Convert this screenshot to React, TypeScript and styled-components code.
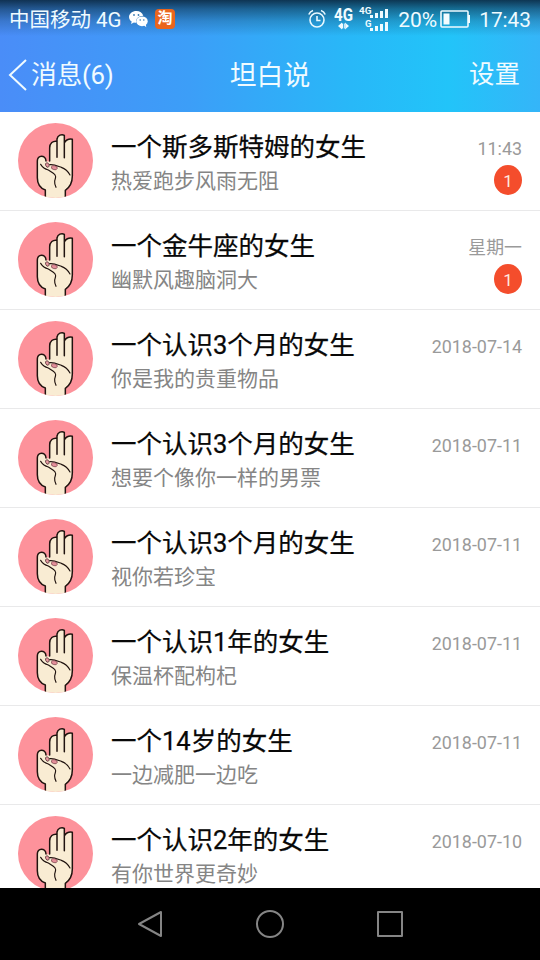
import React from 'react';
import styled, { createGlobalStyle } from 'styled-components';

const Global = createGlobalStyle`
  * { box-sizing: border-box; }
  body {
    margin: 0;
    background: #000;
    font-family: Roboto, "Noto Sans CJK SC", sans-serif;
  }
`;

const Screen = styled.div`
  width: 540px;
  height: 960px;
  display: flex;
  flex-direction: column;
  overflow: hidden;
  background: #fff;
`;

const Header = styled.header`
  height: 112px;
  flex: none;
  color: #f0fbff;
  background:
    linear-gradient(180deg, rgba(10, 40, 65, 0.9) 0, rgba(12, 52, 80, 0.6) 9px, rgba(15, 60, 90, 0.27) 21px, rgba(20, 70, 100, 0) 36px),
    linear-gradient(90deg, #4a8df8 0%, #3c9ef8 35%, #28b8f8 65%, #22c4f9 83%, #35b5f8 100%);
`;

const StatusBar = styled.div`
  height: 38px;
  display: flex;
  justify-content: space-between;
  padding: 1px 9px 0 9px;
`;

const StatusGroup = styled.div`
  display: flex;
  align-items: center;
  height: 36px;
`;

const StatusText = styled.span<{ $size: number }>`
  font-size: ${(p) => p.$size}px;
  line-height: 38px;
  white-space: pre;
  padding-top: 2px;
`;

const Carrier = styled(StatusText)`
  width: 120px;
`;

const Glyph = styled.svg<{ $left?: number }>`
  display: block;
  flex: none;
  margin-left: ${(p) => p.$left ?? 0}px;
`;

const ShopBadge = styled.span`
  width: 20px;
  height: 20px;
  margin: -1px 0 0 7px;
  border-radius: 4px;
  background: #ea651d;
  color: #fff;
  font-size: 15px;
  font-weight: 700;
  line-height: 19px;
  text-align: center;
`;

const Percent = styled(StatusText)`
  margin-left: 8px;
`;

const Clock = styled(StatusText)`
  margin-left: 8px;
`;

const NavBar = styled.nav`
  height: 74px;
  display: grid;
  grid-template-columns: 1fr auto 1fr;
  align-items: center;
  padding: 0 20px 0 8px;
  line-height: 74px;
`;

const Back = styled.div`
  display: flex;
  align-items: center;
  gap: 4px;
  margin-top: -2px;
  font-size: 25.8px;
  letter-spacing: -0.3px;
`;

const NavTitle = styled.h1`
  margin: 1px 0 0;
  padding-left: 12px;
  font-size: 26.8px;
  font-weight: 400;
`;

const Settings = styled.div`
  margin-top: -3px;
  text-align: right;
  font-size: 25.5px;
`;

const List = styled.main`
  height: 776px;
  flex: none;
  overflow: hidden;
`;

const Row = styled.article`
  height: 99px;
  display: flex;
  padding: 11px 18px 0;
  border-bottom: 1px solid #e9e9ea;
`;

const Texts = styled.div`
  flex: 1;
  margin-left: 18px;
  white-space: nowrap;
`;

const Name = styled.h2`
  margin: 5px 0 0;
  color: #080808;
  font-size: 25.5px;
  font-weight: 400;
  line-height: 38px;
  -webkit-text-stroke: 0.25px #080808;
`;

const Message = styled.p`
  margin: -1px 0 0;
  color: #858585;
  font-size: 21px;
  line-height: 32px;
`;

const Side = styled.div`
  display: flex;
  flex-direction: column;
  align-items: flex-end;
`;

const Time = styled.time`
  margin-top: 13px;
  height: 26px;
  color: #9a9a9a;
  font-size: 17.9px;
  line-height: 26px;
  white-space: nowrap;
`;

const Unread = styled.span`
  width: 28px;
  height: 30px;
  margin-top: 3px;
  border-radius: 50%;
  background: #f44d2c;
  color: #ffeadf;
  font-size: 17px;
  line-height: 33px;
  text-align: center;
`;

const SystemBar = styled.footer`
  height: 72px;
  flex: none;
  display: flex;
  align-items: center;
  justify-content: center;
  gap: 90px;
  background: #000;
`;

const Avatar = ({ id }: { id: string }) => (
  <Glyph width="75" height="75" viewBox="24 23 225 225">
    <clipPath id={id}>
      <circle cx="136.500" cy="135.500" r="112.500" />
    </clipPath>
    <g clipPath={`url(#${id})`}>
      <rect x="24" y="23" width="225" height="225" fill="#fd929b" />
      <path
        d="M106 254V224C88 217 82 204 82 187V138C81 117 107 118 108 137L119 139V98C119 83 129 76 141 78V71C143 60 155 55 163 60V83C166 75 176 69 187 72V182C187 202 179 216 166 225V254Z"
        fill="#f9ecd3"
      />
      <g fill="none" stroke="#20130f" strokeWidth="4.500" strokeLinecap="round" strokeLinejoin="round">
        <path d="M106 254V224C88 217 82 204 82 187V138C81 117 107 118 108 137" />
        <path d="M119 137V98C119 83 129 76 141 78V126M141 78V71C143 60 155 55 163 60V127M163 83C166 75 176 69 187 72V182C187 202 179 216 166 225V254" />
        <path d="M92 147C97 155 104 161 115 164L130 174C140 181 137 187 134 197Q133 205 138 216" strokeWidth="3.500" />
        <path d="M119 148C130 146 143 152 154 156Q171 162 180 179" strokeWidth="3.500" />
      </g>
      <ellipse cx="112" cy="149" rx="5" ry="7" fill="#e99ba3" stroke="#44252a" strokeWidth="2" transform="rotate(-25 112 149)" />
      <ellipse cx="133" cy="157" rx="9" ry="6" fill="#e48f99" stroke="#75434a" strokeWidth="2" transform="rotate(15 133 157)" />
    </g>
  </Glyph>
);

const WeChat = () => (
  <Glyph width="19" height="17" viewBox="0 0 19 17">
    <path d="M7.500 0C3.300 0 0 2.700 0 6c0 1.900 1 3.500 2.700 4.600L2 13l2.900-1.500c.8.200 1.500.3 2.300.3C6.500 7.500 9.500 5 14.300 4.800 13.400 2 10.700 0 7.500 0Z" fill="#fff" />
    <ellipse cx="13" cy="10.300" rx="5.700" ry="4.900" fill="#fff" />
    <path d="m14.500 14 2.800 2.200-.5-3Z" fill="#fff" />
    <g fill="#397bb3">
      <circle cx="5" cy="4" r=".9" />
      <circle cx="9.500" cy="4" r=".9" />
      <circle cx="11.200" cy="9" r=".8" />
      <circle cx="14.800" cy="9" r=".8" />
    </g>
  </Glyph>
);

const Alarm = () => (
  <Glyph width="18" height="20" viewBox="0 0 18 20" fill="none" stroke="#e8f8ff" strokeWidth="1.600">
    <circle cx="9" cy="11" r="7" />
    <path d="M9 7v4.500h3.500M.8 5.500Q2 2.500 5 1.500M17.200 5.500Q16 2.500 13 1.500" />
  </Glyph>
);

const Network = () => (
  <Glyph $left={8} width="56" height="30" viewBox="0 0 56 30" fill="#f0fbff">
    <text x="0" y="17" fontSize="18" fontWeight="700" textLength="19" lengthAdjust="spacingAndGlyphs">4G</text>
    <path d="m4 22 4-3.500v7Zm11 0-4-3.500v7ZM8 19.500h1.200v5H8Zm2.200 0h1v5h-1Z" />
    <text x="25" y="10" fontSize="9.500" fontWeight="700" textLength="12.500" lengthAdjust="spacingAndGlyphs">4G</text>
    <text x="31" y="23" fontSize="9.500" fontWeight="700">G</text>
    <path d="M36 11h3v3h-3Zm5-2h3v5h-3Zm5-2h3v7h-3Zm5-2h3v9h-3ZM36 24h3v3h-3Zm5-2h3v5h-3Zm5-2h3v7h-3Zm5-2h3v9h-3Z" />
  </Glyph>
);

const Battery = () => (
  <Glyph $left={3} width="31" height="18" viewBox="0 0 31 18">
    <rect x="1" y="1" width="27" height="16" rx="1" fill="none" stroke="#eefaff" strokeWidth="1.600" />
    <path d="M3.500 3.500h6v11h-6ZM28 5h2v8h-2Z" fill="#f3fcff" />
  </Glyph>
);

interface Conversation {
  name: string;
  message: string;
  time: string;
  unread?: number;
}

const conversations: Conversation[] = [
  { name: '一个斯多斯特姆的女生', message: '热爱跑步风雨无阻', time: '11:43', unread: 1 },
  { name: '一个金牛座的女生', message: '幽默风趣脑洞大', time: '星期一', unread: 1 },
  { name: '一个认识3个月的女生', message: '你是我的贵重物品', time: '2018-07-14' },
  { name: '一个认识3个月的女生', message: '想要个像你一样的男票', time: '2018-07-11' },
  { name: '一个认识3个月的女生', message: '视你若珍宝', time: '2018-07-11' },
  { name: '一个认识1年的女生', message: '保温杯配枸杞', time: '2018-07-11' },
  { name: '一个14岁的女生', message: '一边减肥一边吃', time: '2018-07-11' },
  { name: '一个认识2年的女生', message: '有你世界更奇妙', time: '2018-07-10' },
];

export default function App() {
  return (
    <Screen>
      <Global />
      <Header>
        <StatusBar>
          <StatusGroup>
            <Carrier $size={20.5}>中国移动 4G</Carrier>
            <WeChat />
            <ShopBadge>淘</ShopBadge>
          </StatusGroup>
          <StatusGroup>
            <Alarm />
            <Network />
            <Percent $size={21}>20%</Percent>
            <Battery />
            <Clock $size={20.8}>17:43</Clock>
          </StatusGroup>
        </StatusBar>
        <NavBar>
          <Back>
            <Glyph width="19" height="34" viewBox="0 0 19 34" fill="none" stroke="#f0fbff" strokeWidth="2">
              <path d="M18 2 2 17l16 15" />
            </Glyph>
            消息(6)
          </Back>
          <NavTitle>坦白说</NavTitle>
          <Settings>设置</Settings>
        </NavBar>
      </Header>
      <List>
        {conversations.map((c, i) => (
          <Row key={i}>
            <Avatar id={`avatar-${i}`} />
            <Texts>
              <Name>{c.name}</Name>
              <Message>{c.message}</Message>
            </Texts>
            <Side>
              <Time>{c.time}</Time>
              {c.unread && <Unread>{c.unread}</Unread>}
            </Side>
          </Row>
        ))}
      </List>
      <SystemBar>
        <Glyph width="30" height="30" viewBox="0 0 30 30" fill="none" stroke="#858585" strokeWidth="2" strokeLinejoin="round">
          <path d="M26 3v24L4 15Z" />
        </Glyph>
        <Glyph width="30" height="30" viewBox="0 0 30 30" fill="none" stroke="#858585" strokeWidth="2">
          <circle cx="15" cy="15" r="13" />
        </Glyph>
        <Glyph width="30" height="30" viewBox="0 0 30 30" fill="none" stroke="#858585" strokeWidth="2" strokeLinejoin="round">
          <path d="M3 3h24v24H3Z" />
        </Glyph>
      </SystemBar>
    </Screen>
  );
}
